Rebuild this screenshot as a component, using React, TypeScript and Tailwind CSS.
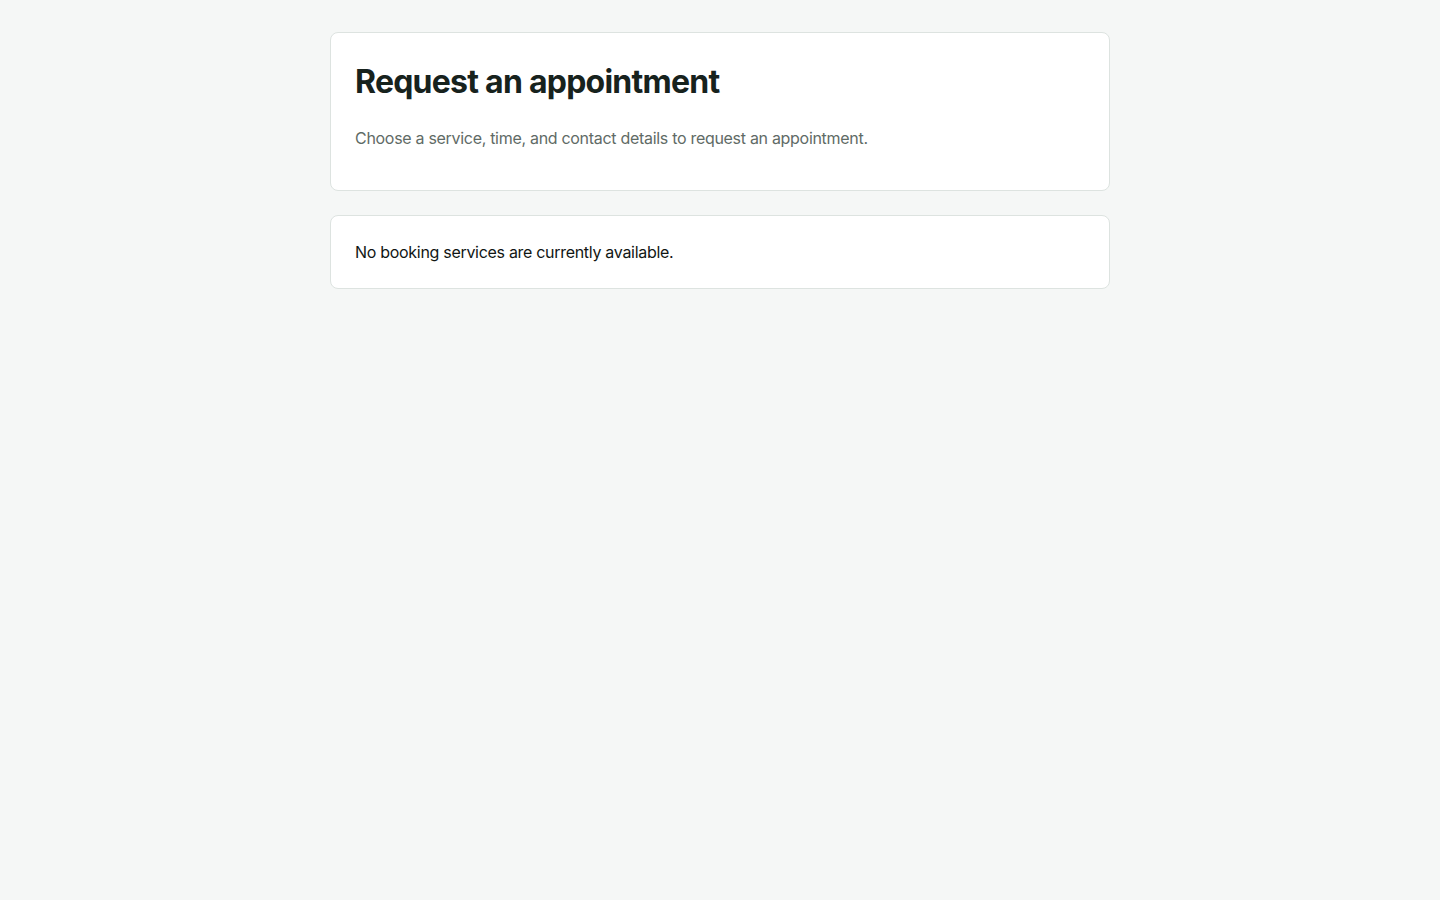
import React from 'react';

export default function App() {
  return (
    <div
      className="min-h-screen bg-[#f5f7f6] text-[#111614]"
      style={{ fontFamily: 'Inter, "Noto Sans", sans-serif' }}
    >
      <div className="mx-auto flex w-[780px] flex-col gap-6 pt-8">
        <section className="rounded-lg border border-[#dde3e0] bg-white px-6 pt-6 pb-10">
          <h1 className="pt-[2px] text-[32px] font-bold leading-[46px] tracking-[-0.75px] text-[#17221d]">
            Request an appointment
          </h1>
          <p className="mt-[21px] text-base leading-6 tracking-[-0.3px] text-[#5f6b66]">
            Choose a service, time, and contact details to request an appointment.
          </p>
        </section>

        <section className="rounded-lg border border-[#dde3e0] bg-white p-6">
          <p className="text-base leading-6 tracking-[-0.3px] text-[#111614]">
            No booking services are currently available.
          </p>
        </section>
      </div>
    </div>
  );
}
